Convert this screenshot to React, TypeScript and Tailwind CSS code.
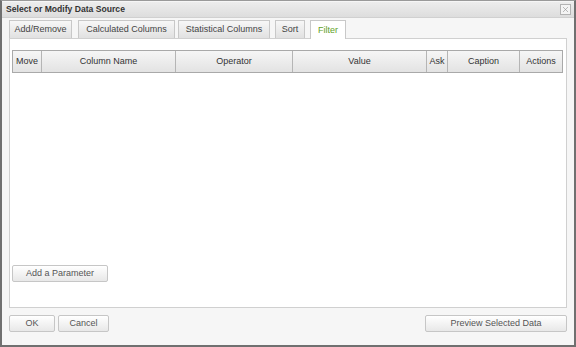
import { X } from 'lucide-react'

const tabs = [
  { label: 'Add/Remove', cls: 'w-[63px] ml-0' },
  { label: 'Calculated Columns', cls: 'w-[97px] ml-[6px]' },
  { label: 'Statistical Columns', cls: 'w-[92px] ml-[3px]' },
  { label: 'Sort', cls: 'w-[30px] ml-[5px]' },
  { label: 'Filter', cls: 'w-[36px] ml-[5px]' },
]

const columns = [
  { label: 'Move', w: 'w-[29px]' },
  { label: 'Column Name', w: 'w-[134px]' },
  { label: 'Operator', w: 'w-[117px]' },
  { label: 'Value', w: 'w-[134px]' },
  { label: 'Ask', w: 'w-[21px]' },
  { label: 'Caption', w: 'w-[72px]' },
  { label: 'Actions', w: 'flex-1' },
]

function Button({ children, className }: { children: React.ReactNode; className: string }) {
  return (
    <button
      className={`h-[17px] border border-[#c6c6c6] rounded-[2px] bg-gradient-to-b from-white to-[#e8e8e8] text-[9px] text-[#555] leading-none ${className}`}
    >
      {children}
    </button>
  )
}

export default function App() {
  return (
    <div className="w-[576px] h-[347px] bg-white font-['Liberation_Sans',Arial,sans-serif]">
      <div className="w-full h-full border-2 border-t border-[#707070] border-t-[#9a9a9a] bg-[#f6f6f6] flex flex-col">
        {/* title bar */}
        <div className="h-[16px] mt-[1px] flex items-center justify-between pl-[4px] pr-[3px] bg-gradient-to-b from-[#ededed] to-[#dddddd] border-b border-[#d0d0d0]">
          <span className="text-[8.6px] font-bold text-[#333]">Select or Modify Data Source</span>
          <div className="w-[11px] h-[11px] border border-[#b3b3b3] bg-[#f4f4f4] flex items-center justify-center">
            <X size={9} strokeWidth={1.5} className="text-[#8a8a8a]" />
          </div>
        </div>

        <div className="flex-1 flex flex-col px-[7px]">
          {/* tabs */}
          <div className="flex items-end h-[20px]">
            {tabs.map((t) => {
              const active = t.label === 'Filter'
              return (
                <div
                  key={t.label}
                  className={`${t.cls} border border-b-0 border-[#c8c8c8] text-[9px] leading-none flex items-center justify-center ${
                    active
                      ? 'h-[19px] bg-white text-[#62a126] relative top-[1px]'
                      : 'h-[18px] bg-gradient-to-b from-[#f7f7f7] to-[#e1e1e1] text-[#444]'
                  }`}
                >
                  {t.label}
                </div>
              )
            })}
          </div>

          {/* panel */}
          <div className="h-[270px] bg-white border border-[#d0d0d0] flex flex-col pl-[2px] pr-[3px] pt-[11px]">
            <div className="flex h-[23px] border border-[#a9a9a9] bg-gradient-to-b from-[#f6f6f6] to-[#e3e3e3]">
              {columns.map((c, i) => (
                <div
                  key={c.label}
                  className={`${c.w} flex items-center justify-center text-[9px] text-[#333] ${
                    i < columns.length - 1 ? 'border-r border-[#b5b5b5]' : ''
                  }`}
                >
                  {c.label}
                </div>
              ))}
            </div>
            <div className="flex-1" />
            <div className="pb-[24px]">
              <Button className="w-[96px]">Add a Parameter</Button>
            </div>
          </div>

          {/* footer */}
          <div className="flex items-center justify-between mt-[7px]">
            <div className="flex gap-[3px]">
              <Button className="w-[46px]">OK</Button>
              <Button className="w-[51px]">Cancel</Button>
            </div>
            <Button className="w-[142px]">Preview Selected Data</Button>
          </div>
        </div>
      </div>
    </div>
  )
}
